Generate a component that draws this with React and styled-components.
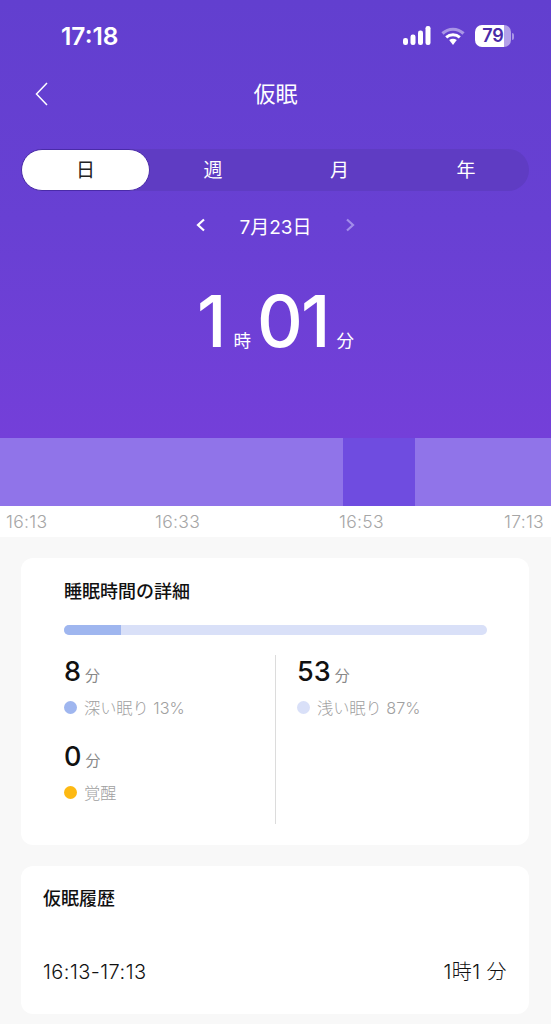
import React from "react";
import styled, { createGlobalStyle } from "styled-components";

const FONT = `Inter, "Noto Sans CJK JP", sans-serif`;

const GlobalStyle = createGlobalStyle`
  html, body {
    margin: 0;
    padding: 0;
    background: #f8f8f8;
    font-family: ${FONT};
  }
  * {
    box-sizing: border-box;
  }
`;

const Page = styled.div`
  width: 551px;
  height: 1024px;
  overflow: hidden;
  background: #f8f8f8;
`;

const Hero = styled.header`
  height: 438px;
  padding-top: 1px;
  background: linear-gradient(180deg, #623fcf 0%, #6840d3 50%, #743fd9 100%);
  color: #fff;
`;

const StatusBar = styled.div`
  height: 58px;
  display: flex;
  align-items: center;
  justify-content: space-between;
  padding: 12px 37px 0 61px;
`;

const Clock = styled.span`
  font-size: 24.5px;
  font-weight: 600;
`;

const StatusIcons = styled.div`
  display: flex;
  align-items: center;
  gap: 10px;
`;

const Battery = styled.div`
  width: 36px;
  height: 22px;
  border-radius: 7px;
  overflow: hidden;
  background: linear-gradient(90deg, #fff 0 81%, #b3a1e9 81% 100%);
  color: #4a2ba8;
  font-size: 18px;
  font-weight: 600;
  line-height: 22px;
  text-align: center;
`;

const BatteryTip = styled.i`
  width: 2px;
  height: 7px;
  margin-left: -9px;
  border-radius: 0 2px 2px 0;
  background: #a995e6;
`;

const NavBar = styled.div`
  height: 70px;
  padding: 0 35px;
  display: grid;
  grid-template-columns: 35px 1fr 35px;
  align-items: center;
`;

const Title = styled.h1`
  margin: 0;
  font-size: 22px;
  font-weight: 400;
  line-height: 30px;
  text-align: center;
`;

const Tabs = styled.div`
  margin: 20px 22px 0 21px;
  height: 42px;
  display: grid;
  grid-template-columns: 129px 126px 127px 126px;
  border-radius: 21px;
  background: #5f3cc3;
`;

const Tab = styled.div`
  display: flex;
  align-items: center;
  justify-content: center;
  padding-bottom: 3px;
  font-size: 19px;
  border-radius: 21px;
  background: ${(p) => (p.$active ? "#fff" : "transparent")};
  color: ${(p) => (p.$active ? "#222" : "#fff")};
  border: ${(p) => (p.$active ? "1px solid #4a2ba8" : "none")};
`;

const DateRow = styled.div`
  margin-top: 22px;
  height: 24px;
  display: flex;
  align-items: center;
  justify-content: center;
  gap: 33px;
  font-size: 19px;
`;

const Duration = styled.div`
  margin-top: 46px;
  display: flex;
  align-items: baseline;
  justify-content: center;
  line-height: 76px;
`;

const BigNumber = styled.span`
  font-size: 71px;
  font-weight: 500;
  letter-spacing: -2px;
`;

const BigUnit = styled.span`
  font-size: 17.5px;
  margin: 0 ${(p) => (p.$last ? "0" : "6px")} 0 ${(p) => (p.$last ? "8px" : "9px")};
`;

const Chart = styled.div`
  height: 68px;
  display: grid;
  grid-template-columns: 343px 72px 136px;
`;

const Segment = styled.div`
  background: ${(p) => (p.$deep ? "#6f4ce0" : "#9074e9")};
`;

const Axis = styled.div`
  height: 31px;
  padding: 6px 0 0 6px;
  display: grid;
  grid-template-columns: 149px 184px 165px 1fr;
  background: #fff;
  color: #a6a6a6;
  font-size: 17.5px;
  font-weight: 300;
  letter-spacing: 0.3px;
  line-height: 20px;
`;

const Body = styled.main`
  padding: 21px 22px 0 21px;
  display: flex;
  flex-direction: column;
  gap: 21px;
`;

const Card = styled.section`
  background: #fff;
  border-radius: 12px;
`;

const DetailCard = styled(Card)`
  height: 287px;
  padding: 23px 42px 0 43px;
`;

const CardTitle = styled.h2`
  margin: 0;
  font-size: 18px;
  font-weight: 500;
  line-height: 22px;
  color: #111;
`;

const Progress = styled.div`
  margin-top: 22px;
  height: 10px;
  border-radius: 5px;
  overflow: hidden;
  background: #d9e0f8;
`;

const ProgressFill = styled.div`
  height: 100%;
  background: #9fb6ef;
`;

const Stats = styled.div`
  margin-top: 20px;
  height: 169px;
  display: grid;
  grid-template-columns: 211px 1fr;
`;

const StatColumn = styled.div`
  display: flex;
  flex-direction: column;
  gap: 21px;
  padding-left: ${(p) => (p.$right ? "21px" : "0")};
  border-left: ${(p) => (p.$right ? "1px solid #dcdcdc" : "none")};
`;

const Value = styled.div`
  display: flex;
  align-items: baseline;
  gap: 4px;
  height: 34px;
  font-size: 27px;
  font-weight: 500;
  line-height: 34px;
  color: #111;
`;

const ValueUnit = styled.span`
  font-size: 15px;
  font-weight: 400;
  color: #888;
`;

const Legend = styled.div`
  margin-top: 6px;
  display: flex;
  align-items: center;
  gap: 7px;
  height: 24px;
  font-size: 16.2px;
  font-weight: 300;
  color: #a0a0a0;
`;

const Dot = styled.i`
  width: 13px;
  height: 13px;
  border-radius: 50%;
  background: ${(p) => p.$color};
`;

const HistoryCard = styled(Card)`
  height: 148px;
  padding: 22px 22px 0 22px;
`;

const HistoryRow = styled.div`
  margin-top: 50px;
  display: flex;
  justify-content: space-between;
  font-size: 20px;
  font-weight: 300;
  line-height: 24px;
  letter-spacing: 0.45px;
  color: #111;
`;

const BackIcon = () => (
  <svg width="13" height="24" viewBox="0 0 13 24" fill="none" stroke="#fff" strokeWidth="1.5">
    <path d="M12 1 L1.5 12 L12 23" />
  </svg>
);

const Chevron = ({ right, dim }) => (
  <svg width="10" height="14" viewBox="0 0 10 14" fill="none" stroke={dim ? "#a28ceb" : "#fff"} strokeWidth="2.2">
    <path d={right ? "M2 1.5 L8 7 L2 12.5" : "M8 1.5 L2 7 L8 12.5"} />
  </svg>
);

const SignalIcon = () => (
  <svg width="28" height="20" viewBox="0 0 28 20" fill="#fff">
    <rect x="0" y="12" width="5" height="7" rx="2.2" />
    <rect x="7.5" y="8.5" width="5" height="10.5" rx="2.2" />
    <rect x="15" y="4.5" width="5" height="14.5" rx="2.2" />
    <rect x="22.5" y="0" width="5" height="19" rx="2.2" />
  </svg>
);

const WifiIcon = () => (
  <svg width="24" height="19" viewBox="0 0 24 19" fill="none">
    <path d="M1.5 6.5 C7.5 0.8 16.5 0.8 22.5 6.5" stroke="#a995e6" strokeWidth="3.2" />
    <path d="M5.2 10.3 C9 7 15 7 18.8 10.3" stroke="#fff" strokeWidth="3" />
    <path d="M8.2 13 L12 18 L15.8 13 C13.5 11.3 10.5 11.3 8.2 13 Z" fill="#fff" />
  </svg>
);

export default function App() {
  return (
    <Page>
      <GlobalStyle />
      <Hero>
        <StatusBar>
          <Clock>17:18</Clock>
          <StatusIcons>
            <SignalIcon />
            <WifiIcon />
            <Battery>79</Battery>
            <BatteryTip />
          </StatusIcons>
        </StatusBar>
        <NavBar>
          <BackIcon />
          <Title>仮眠</Title>
        </NavBar>
        <Tabs>
          <Tab $active>日</Tab>
          <Tab>週</Tab>
          <Tab>月</Tab>
          <Tab>年</Tab>
        </Tabs>
        <DateRow>
          <Chevron />
          <span>7月23日</span>
          <Chevron right dim />
        </DateRow>
        <Duration>
          <BigNumber>1</BigNumber>
          <BigUnit>時</BigUnit>
          <BigNumber>01</BigNumber>
          <BigUnit $last>分</BigUnit>
        </Duration>
      </Hero>
      <Chart>
        <Segment />
        <Segment $deep />
        <Segment />
      </Chart>
      <Axis>
        <span>16:13</span>
        <span>16:33</span>
        <span>16:53</span>
        <span>17:13</span>
      </Axis>
      <Body>
        <DetailCard>
          <CardTitle>睡眠時間の詳細</CardTitle>
          <Progress>
            <ProgressFill style={{ width: "13.5%" }} />
          </Progress>
          <Stats>
            <StatColumn>
              <div>
                <Value>
                  8<ValueUnit>分</ValueUnit>
                </Value>
                <Legend>
                  <Dot $color="#9fb6ef" />
                  深い眠り 13%
                </Legend>
              </div>
              <div>
                <Value>
                  0<ValueUnit>分</ValueUnit>
                </Value>
                <Legend>
                  <Dot $color="#fdb913" />
                  覚醒
                </Legend>
              </div>
            </StatColumn>
            <StatColumn $right>
              <div>
                <Value>
                  53<ValueUnit>分</ValueUnit>
                </Value>
                <Legend>
                  <Dot $color="#d9e0f8" />
                  浅い眠り 87%
                </Legend>
              </div>
            </StatColumn>
          </Stats>
        </DetailCard>
        <HistoryCard>
          <CardTitle>仮眠履歴</CardTitle>
          <HistoryRow>
            <span>16:13-17:13</span>
            <span>1時1 分</span>
          </HistoryRow>
        </HistoryCard>
      </Body>
    </Page>
  );
}
